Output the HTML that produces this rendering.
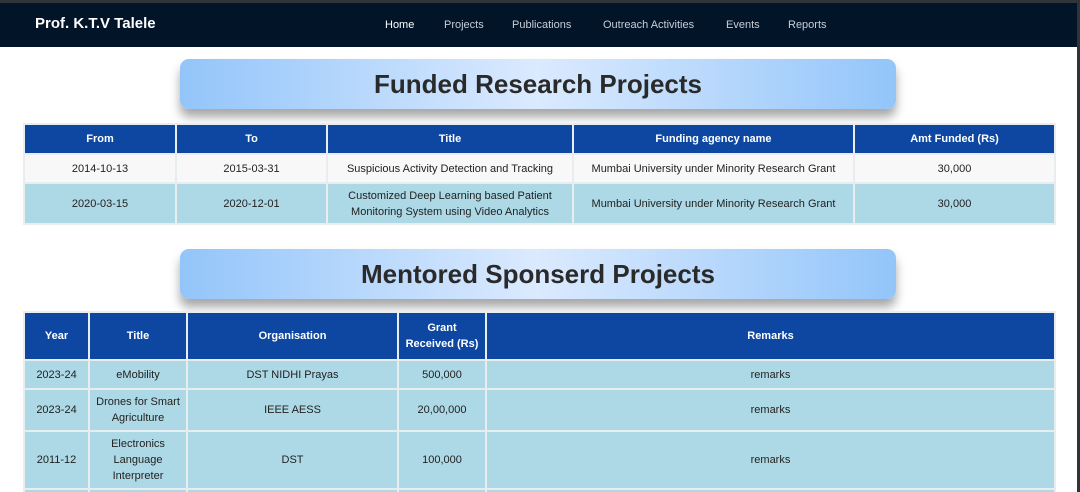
<!DOCTYPE html>
<html><head><meta charset="utf-8"><style>
*{box-sizing:border-box;margin:0;padding:0}
html,body{width:1080px;height:492px;overflow:hidden}
body{background:#fff;font-family:"Liberation Sans",sans-serif;position:relative}
.top{position:absolute;left:0;top:0;width:1080px;height:3px;background:#2f3438}
.nav{position:absolute;left:0;top:3px;width:1080px;height:44px;background:#011428}
.brand{position:absolute;left:35px;top:12px;color:#fff;font-weight:bold;font-size:15px}
.nav a{position:absolute;top:16px;color:#c9ced6;font-size:11px;text-decoration:none}
.rs{position:absolute;right:0;top:0;width:3px;height:492px;background:#2f3438}
.tb{position:absolute;left:180px;width:716px;height:50px;border-radius:9px;background:linear-gradient(90deg,#93c5fa,#dbeafe 50%,#93c5fa);box-shadow:0 8px 10px rgba(0,0,0,.35);text-align:center;font-size:26px;font-weight:bold;color:#2a2a2a;line-height:50px}
table{position:absolute;left:23px;width:1031px;border-collapse:collapse;font-size:11px;color:#222;table-layout:fixed}
td,th{border:2px solid #e8eef0;text-align:center;padding:0 4px;line-height:16px}
th{background:#0d47a1;color:#fff;font-weight:bold;font-size:11px}
.w td{background:#f8f8f8}
.b td{background:#add8e6}
</style></head><body>
<div class="top"></div>
<div class="nav"><div class="brand">Prof. K.T.V Talele</div>
<a style="left:385px;color:#fff">Home</a><a style="left:444px">Projects</a><a style="left:512px">Publications</a><a style="left:603px">Outreach Activities</a><a style="left:726px">Events</a><a style="left:788px">Reports</a></div>
<div class="tb" style="top:59px">Funded Research Projects</div>
<table style="top:123px">
<colgroup><col style="width:152px"><col style="width:151px"><col style="width:246px"><col style="width:281px"><col style="width:201px"></colgroup>
<tr style="height:30px"><th>From</th><th>To</th><th>Title</th><th>Funding agency name</th><th>Amt Funded (Rs)</th></tr>
<tr class="w" style="height:29px"><td>2014-10-13</td><td>2015-03-31</td><td>Suspicious Activity Detection and Tracking</td><td>Mumbai University under Minority Research Grant</td><td>30,000</td></tr>
<tr class="b" style="height:41px"><td>2020-03-15</td><td>2020-12-01</td><td>Customized Deep Learning based Patient Monitoring System using Video Analytics</td><td>Mumbai University under Minority Research Grant</td><td>30,000</td></tr>
</table>
<div class="tb" style="top:249px">Mentored Sponserd Projects</div>
<table style="top:311px">
<colgroup><col style="width:65px"><col style="width:98px"><col style="width:211px"><col style="width:88px"><col style="width:569px"></colgroup>
<tr style="height:48px"><th>Year</th><th>Title</th><th>Organisation</th><th>Grant Received (Rs)</th><th>Remarks</th></tr>
<tr class="b" style="height:29px"><td>2023-24</td><td>eMobility</td><td>DST NIDHI Prayas</td><td>500,000</td><td>remarks</td></tr>
<tr class="b" style="height:42px"><td>2023-24</td><td>Drones for Smart Agriculture</td><td>IEEE AESS</td><td>20,00,000</td><td>remarks</td></tr>
<tr class="b" style="height:58px"><td>2011-12</td><td>Electronics Language Interpreter</td><td>DST</td><td>100,000</td><td>remarks</td></tr>
<tr class="b" style="height:20px"><td></td><td></td><td></td><td></td><td></td></tr>
</table>
<div class="rs"></div>
</body></html>
